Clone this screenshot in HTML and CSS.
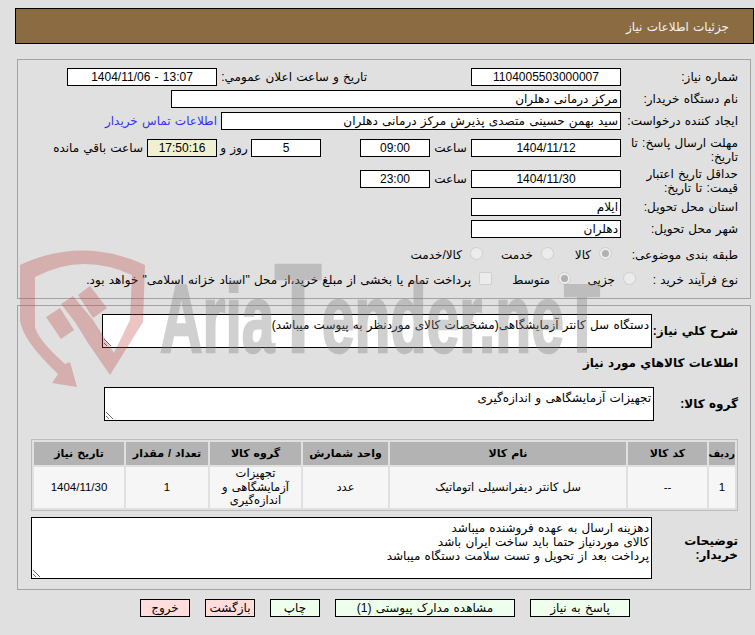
FILE: index.html
```html
<!DOCTYPE html>
<html lang="fa" dir="rtl">
<head>
<meta charset="utf-8">
<title>جزئیات اطلاعات نیاز</title>
<link rel="stylesheet" href="styles.css">
</head>
<body>
<div class="page">
  <header class="title-bar">جزئیات اطلاعات نیاز</header>

  <section class="panel panel-form">
    <div class="row r-18">
      <div class="lbl">شماره نیاز:</div>
      <div class="box w150 center">1104005503000007</div>
      <div class="txt pub-label">تاریخ و ساعت اعلان عمومي:</div>
      <div class="box w150 center" dir="ltr">1404/11/06 - 13:07</div>
    </div>
    <div class="row r-18 mt4">
      <div class="lbl">نام دستگاه خریدار:</div>
      <div class="box w450">مرکز درمانی دهلران</div>
    </div>
    <div class="row r-18 mt4">
      <div class="lbl">ایجاد کننده درخواست:</div>
      <div class="box w400">سید بهمن حسینی متصدی پذیرش مرکز درمانی دهلران</div>
      <a class="contact" href="#">اطلاعات تماس خریدار</a>
    </div>
    <div class="row r-28 mt6">
      <div class="lbl">مهلت ارسال پاسخ: تا تاریخ:</div>
      <div class="box w150 center">1404/11/12</div>
      <div class="txt sep41">ساعت</div>
      <div class="box w70 center">09:00</div>
      <div class="box w70 center gap39">5</div>
      <div class="txt sep34">روز و</div>
      <div class="box w70 center timer">17:50:16</div>
      <div class="txt remain">ساعت باقي مانده</div>
    </div>
    <div class="row r-28 mt3">
      <div class="lbl">حداقل تاریخ اعتبار قیمت: تا تاریخ:</div>
      <div class="box w150 center">1404/11/30</div>
      <div class="txt sep41">ساعت</div>
      <div class="box w70 center">23:00</div>
    </div>
    <div class="row r-18 mt3">
      <div class="lbl">استان محل تحویل:</div>
      <div class="box w150">ایلام</div>
    </div>
    <div class="row r-18 mt4">
      <div class="lbl">شهر محل تحویل:</div>
      <div class="box w150">دهلران</div>
    </div>
    <div class="row r-18 mt7 opts">
      <div class="lbl">طبقه بندی موضوعی:</div>
      <span class="radio on s1"></span><span class="txt t1">کالا</span>
      <span class="radio"></span><span class="txt t2">خدمت</span>
      <span class="radio"></span><span class="txt">کالا/خدمت</span>
    </div>
    <div class="row r-18 mt7 opts">
      <div class="lbl lbl-short">نوع فرآیند خرید :</div>
      <span class="radio"></span><span class="txt t4">جزیی</span>
      <span class="radio on"></span><span class="txt t5">متوسط</span>
      <span class="check"></span><span class="txt">پرداخت تمام یا بخشی از مبلغ خرید،از محل "اسناد خزانه اسلامی" خواهد بود.</span>
    </div>
  </section>

  <section class="panel panel-items">
    <div class="row area-row">
      <div class="lbl lbl-b lbl-area">شرح کلي نیاز:</div>
      <textarea class="area a1" readonly>دستگاه سل کانتر آزمایشگاهی(مشخصات کالای موردنظر به پیوست میباشد)</textarea>
    </div>
    <h2 class="sub">اطلاعات كالاهاي مورد نياز</h2>
    <div class="row area-row group-row">
      <div class="lbl lbl-b lbl-group">گروه کالا:</div>
      <textarea class="area a2" readonly>تجهیزات آزمایشگاهی و اندازه‌گیری</textarea>
    </div>
    <div class="table-wrap">
      <table class="items">
        <colgroup>
          <col class="c1"><col class="c2"><col class="c3"><col class="c4"><col class="c5"><col class="c6"><col class="c7">
        </colgroup>
        <thead>
          <tr><th class="th-tight">ردیف</th><th>کد کالا</th><th>نام کالا</th><th>واحد شمارش</th><th>گروه کالا</th><th>تعداد / مقدار</th><th>تاریخ نیاز</th></tr>
        </thead>
        <tbody>
          <tr><td>1</td><td>--</td><td>سل کانتر دیفرانسیلی اتوماتیک</td><td>عدد</td><td>تجهیزات آزمایشگاهی و اندازه‌گیری</td><td>1</td><td>1404/11/30</td></tr>
        </tbody>
      </table>
    </div>
    <div class="row notes-row">
      <div class="lbl lbl-b lbl-notes">توضیحات خریدار:</div>
      <textarea class="area a3" readonly>دهزینه ارسال به عهده فروشنده میباشد
کالای موردنیاز حتما باید ساخت ایران باشد
پرداخت بعد از تحویل و تست سلامت دستگاه میباشد</textarea>
    </div>
  </section>

  <nav class="actions">
    <button class="btn go wide100" type="button">پاسخ به نیاز</button>
    <button class="btn go wide180" type="button">مشاهده مدارک پیوستی (1)</button>
    <button class="btn go" type="button">چاپ</button>
    <button class="btn stop" type="button">بازگشت</button>
    <button class="btn stop" type="button">خروج</button>
  </nav>
</div>

<svg class="watermark" viewBox="0 0 755 635" aria-hidden="true">
  <g class="wm-logo">
    <path fill-rule="evenodd" d="M20 265 Q82 236 145 265 L143 322 L110 375 L88 343 L75 322 L61 304 L73 296 L93 320 L114 353 L130 320 L132 275 Q82 252 35 277 L35 327 Q38 340 65 364 L70 362 L77 387 L52 383 L58 374 Q22 340 20 320 Z"/>
    <path d="M46 317 L60 308 L74 330 L61 339 Z"/>
    <path d="M78 295 L90 286 L107 308 L93 318 Z"/>
  </g>
  <text class="wm-text" x="160" y="352" textLength="440" lengthAdjust="spacingAndGlyphs">Aria<tspan class="wm-big">T</tspan>ender.neT</text>
</svg>
</body>
</html>
```
FILE: styles.css
```css
* { box-sizing: border-box; }
html, body { margin: 0; padding: 0; }
body {
  background: #e0e0e0;
  color: #000;
  font-family: "Liberation Sans", "DejaVu Sans", sans-serif;
  font-size: 12px;
  word-spacing: 0.9px;
  width: 755px;
  height: 635px;
  overflow: hidden;
  position: relative;
}
.page { padding: 8px 0 0 15px; }

.title-bar {
  height: 36px;
  margin-right: 1px;
  background: #8b6c42;
  border: 1px solid #000;
  color: #f2f2f2;
  line-height: 36px;
  padding-right: 24px;
  font-size: 12px;
}

.panel {
  border: 1px solid #a3a3a3;
  margin: 0 4px 0 2px;
  padding-right: 12px;
}
.panel-form { margin-top: 15px; height: 240px; padding-top: 8px; }
.panel-items { margin-top: 6px; height: 285px; padding-top: 8px; }

.row { display: flex; align-items: flex-start; }
.r-18 { min-height: 18px; }
.r-28 { min-height: 28px; }
.mt3 { margin-top: 3px; }
.mt4 { margin-top: 4px; }
.mt6 { margin-top: 6px; }
.mt7 { margin-top: 7px; }

.lbl { width: 117px; padding-left: 5px; line-height: 14px; padding-top: 2px; flex: none; }
.r-28 .lbl { padding-top: 0; }
.lbl-short { width: 102px; }
.lbl-b { font-weight: bold; }

.box {
  height: 18px;
  border: 1px solid #000;
  background: #fff;
  line-height: 16px;
  padding: 0 2px;
  flex: none;
  white-space: nowrap;
  overflow: hidden;
}
.r-28 .box { margin-top: 3px; }
.center { text-align: center; }
.w150 { width: 150px; }
.w70 { width: 70px; }
.w450 { width: 450px; }
.w400 { width: 400px; }
.timer { background: #f0f0d0; }
.gap39 { margin-right: 39px; }

.txt { line-height: 18px; white-space: nowrap; flex: none; }
.r-28 .txt { margin-top: 3px; }
.pub-label { width: 150px; margin-right: 104px; }
.sep41 { width: 41px; text-align: center; }
.sep34 { width: 34px; text-align: center; }
.remain { padding-right: 4px; }
.contact { color: #3333ee; text-decoration: none; line-height: 18px; margin-right: 4px; white-space: nowrap; }

.opts { align-items: center; }
.opts .txt { position: relative; top: 1px; }
.radio {
  width: 13px;
  height: 13px;
  border-radius: 50%;
  border: 1px solid #cfcfcf;
  background: #ececec;
  flex: none;
  margin-left: 8px;
  position: relative;
  top: -1px;
}
.radio.on::after {
  content: "";
  position: absolute;
  inset: 2px;
  border-radius: 50%;
  background: #b0b0b0;
}
.s1 { margin-right: 9px; }
.t1 { width: 37px; }
.t2 { width: 50px; }
.t4 { width: 44px; }
.t5 { width: 58px; }
.check {
  width: 13px;
  height: 13px;
  border: 1px solid #cfcfcf;
  border-radius: 2px;
  background: #ececec;
  flex: none;
  margin-left: 8px;
  position: relative;
  top: -1px;
}

.area {
  display: block;
  border: 1px solid #000;
  border-radius: 0;
  background: #fff;
  color: #000;
  font: inherit;
  word-spacing: inherit;
  line-height: 14px;
  padding: 3px 2px;
  margin: 0;
  outline: none;
  flex: none;
  direction: rtl;
  overflow: hidden;
}
.area-row { align-items: center; }
.lbl-area { width: 86px; padding: 0; }
.a1 { width: 550px; height: 34px; }
.lbl-group { width: 84px; padding: 0; }
.a2 { width: 550px; height: 34px; }
.sub { font-size: 12px; font-weight: bold; margin: 7px 0 0; height: 32px; line-height: 16px; }

.table-wrap { margin: 18px 0 0; width: 707px; }
.items {
  table-layout: fixed;
  width: 707px;
  border: 1px solid #bcbcbc;
  border-spacing: 2px;
  border-collapse: separate;
  font-size: 11.5px;
  padding: 0;
}
.c1 { width: 26px; }
.c2 { width: 79px; }
.c3 { width: 236px; }
.c4 { width: 85px; }
.c5 { width: 91px; }
.c6 { width: 82px; }
.c7 { width: 90px; }
.items th {
  height: 23px;
  background: #b3b3b3;
  font-weight: bold;
  font-size: 11px;
  padding: 0;
  white-space: nowrap;
}
.items th.th-tight { font-size: 10px; }
.items td {
  height: 41px;
  background: #f6f6f6;
  text-align: center;
  padding: 0 4px;
  line-height: 13.5px;
}

.notes-row { margin-top: 6px; align-items: center; }
.lbl-notes { width: 86px; padding: 0; }
.a3 { width: 621px; height: 62px; }

.actions { display: flex; justify-content: center; gap: 15px; margin-top: 9px; }
.btn {
  width: 50px;
  height: 18px;
  border: 1px solid #000;
  border-radius: 0;
  padding: 0;
  color: #000;
  font: inherit;
  word-spacing: inherit;
  line-height: 15px;
  white-space: nowrap;
  overflow: hidden;
}
.go { background: #eeffee; }
.stop { background: #ffdddd; }
.wide100 { width: 100px; }
.wide180 { width: 180px; }

.watermark { position: absolute; left: 0; top: 0; width: 755px; height: 635px; pointer-events: none; direction: ltr; }
.wm-logo { fill: rgba(190, 60, 60, 0.3); }
.wm-text {
  font-family: "Liberation Sans", sans-serif;
  font-weight: bold;
  font-size: 96px;
  fill: #808080;
  stroke: #808080;
  stroke-width: 2.5px;
  opacity: 0.36;
}
.wm-big { font-size: 126px; }
```
